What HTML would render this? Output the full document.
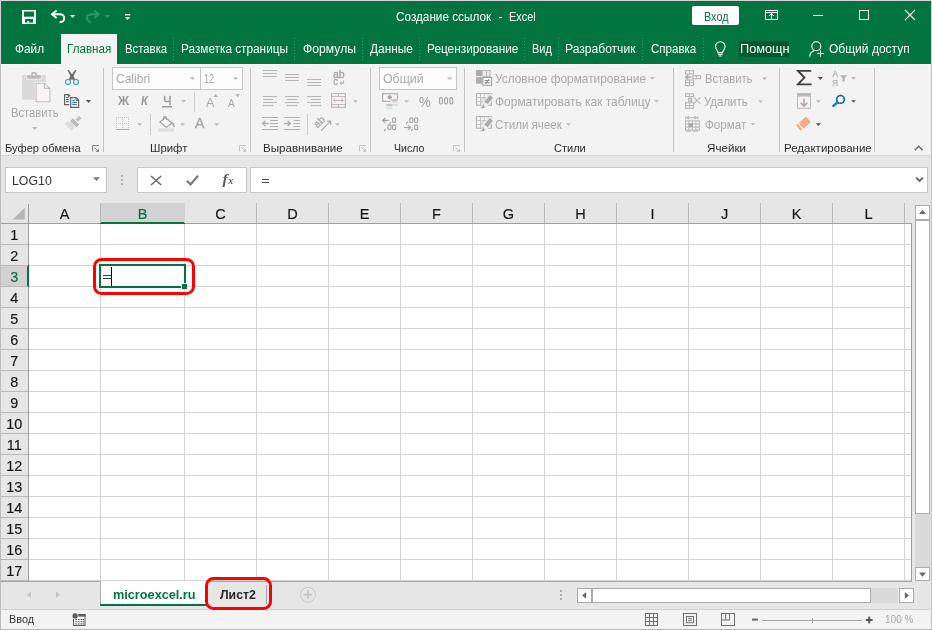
<!DOCTYPE html>
<html><head><meta charset="utf-8"><title>Excel</title>
<style>
html,body{margin:0;padding:0;}
body{width:932px;height:630px;overflow:hidden;position:relative;background:#fff;font-family:"Liberation Sans",sans-serif;}
#app{position:absolute;left:0;top:0;width:932px;height:630px;overflow:hidden;will-change:transform;}
#app div,#app svg{position:absolute;}
.t{position:absolute;white-space:pre;line-height:1;}
</style></head><body><div id="app">
<div style="left:0px;top:0px;width:932px;height:64px;background:#017440;"></div>
<div style="left:0px;top:64px;width:932px;height:91px;background:#f3f3f3;"></div>
<div style="left:0px;top:155px;width:932px;height:1px;background:#d4d4d4;"></div>
<div style="left:0px;top:156px;width:932px;height:47px;background:#e6e6e6;"></div>
<div style="left:0px;top:203px;width:932px;height:378px;background:#e6e6e6;"></div>
<div style="left:0px;top:582px;width:932px;height:28px;background:#e6e6e6;"></div>
<div style="left:0px;top:610px;width:932px;height:20px;background:#f3f3f3;"></div>
<div style="left:0px;top:0px;width:932px;height:1px;background:#8fb8a2;"></div>
<div style="left:61px;top:34px;width:56px;height:30px;background:#f3f3f3;"></div>
<span class="t" style="left:396.00px;top:11.00px;font-size:12px;color:#fff;font-weight:normal;font-style:normal;letter-spacing:0.000px;font-family:'Liberation Sans',sans-serif;transform-origin:0 0;transform:scaleX(0.9786);">Создание ссылок</span>
<span class="t" style="left:498.60px;top:11.00px;font-size:12px;color:#fff;font-weight:normal;font-style:normal;letter-spacing:0.000px;font-family:'Liberation Sans',sans-serif;">-</span>
<span class="t" style="left:509.00px;top:11.00px;font-size:12px;color:#fff;font-weight:normal;font-style:normal;letter-spacing:0.000px;font-family:'Liberation Sans',sans-serif;transform-origin:0 0;transform:scaleX(0.9066);">Excel</span>
<div style="left:692px;top:6px;width:47px;height:19px;background:#fff;border-radius:2px;"></div>
<span class="t" style="left:704.00px;top:11.00px;font-size:12px;color:#017440;font-weight:normal;font-style:normal;letter-spacing:0.000px;font-family:'Liberation Sans',sans-serif;transform-origin:0 0;transform:scaleX(0.9026);">Вход</span>
<span class="t" style="left:15.00px;top:43.00px;font-size:12.5px;color:#fff;font-weight:normal;font-style:normal;letter-spacing:0.000px;font-family:'Liberation Sans',sans-serif;transform-origin:0 0;transform:scaleX(0.9462);">Файл</span>
<span class="t" style="left:66.57px;top:43.00px;font-size:12.5px;color:#017440;font-weight:normal;font-style:normal;letter-spacing:0.000px;font-family:'Liberation Sans',sans-serif;transform-origin:0 0;transform:scaleX(0.9321);">Главная</span>
<span class="t" style="left:124.59px;top:43.00px;font-size:12.5px;color:#fff;font-weight:normal;font-style:normal;letter-spacing:0.000px;font-family:'Liberation Sans',sans-serif;transform-origin:0 0;transform:scaleX(0.9075);">Вставка</span>
<span class="t" style="left:180.56px;top:43.00px;font-size:12.5px;color:#fff;font-weight:normal;font-style:normal;letter-spacing:0.000px;font-family:'Liberation Sans',sans-serif;transform-origin:0 0;transform:scaleX(0.9430);">Разметка страницы</span>
<span class="t" style="left:302.50px;top:43.00px;font-size:12.5px;color:#fff;font-weight:normal;font-style:normal;letter-spacing:0.000px;font-family:'Liberation Sans',sans-serif;transform-origin:0 0;transform:scaleX(0.9741);">Формулы</span>
<span class="t" style="left:370.00px;top:43.00px;font-size:12.5px;color:#fff;font-weight:normal;font-style:normal;letter-spacing:0.000px;font-family:'Liberation Sans',sans-serif;transform-origin:0 0;transform:scaleX(0.9512);">Данные</span>
<span class="t" style="left:426.55px;top:43.00px;font-size:12.5px;color:#fff;font-weight:normal;font-style:normal;letter-spacing:0.000px;font-family:'Liberation Sans',sans-serif;transform-origin:0 0;transform:scaleX(0.9470);">Рецензирование</span>
<span class="t" style="left:531.63px;top:43.00px;font-size:12.5px;color:#fff;font-weight:normal;font-style:normal;letter-spacing:0.000px;font-family:'Liberation Sans',sans-serif;transform-origin:0 0;transform:scaleX(0.8737);">Вид</span>
<span class="t" style="left:565.03px;top:43.00px;font-size:12.5px;color:#fff;font-weight:normal;font-style:normal;letter-spacing:0.000px;font-family:'Liberation Sans',sans-serif;transform-origin:0 0;transform:scaleX(0.9665);">Разработчик</span>
<span class="t" style="left:650.50px;top:43.00px;font-size:12.5px;color:#fff;font-weight:normal;font-style:normal;letter-spacing:0.000px;font-family:'Liberation Sans',sans-serif;transform-origin:0 0;transform:scaleX(0.9229);">Справка</span>
<div style="left:739px;top:41px;width:50px;height:16px;background:#005a2e;"></div>
<div style="left:739px;top:41px;width:50px;height:16px;overflow:hidden;">
<span class="t" style="left:0.78px;top:2.00px;font-size:12.5px;color:#fff;font-weight:normal;font-style:normal;letter-spacing:0.000px;font-family:'Liberation Sans',sans-serif;transform-origin:0 0;transform:scaleX(1.0195);">Помощн</span>
</div>
<span class="t" style="left:828.50px;top:43.00px;font-size:12.5px;color:#fff;font-weight:normal;font-style:normal;letter-spacing:0.000px;font-family:'Liberation Sans',sans-serif;transform-origin:0 0;transform:scaleX(0.9614);">Общий доступ</span>
<div style="left:173px;top:38px;width:1px;height:22px;background:repeating-linear-gradient(to bottom,#2c9b79 0,#2c9b79 1px,transparent 1px,transparent 3px);"></div>
<div style="left:294px;top:38px;width:1px;height:22px;background:repeating-linear-gradient(to bottom,#2c9b79 0,#2c9b79 1px,transparent 1px,transparent 3px);"></div>
<div style="left:362px;top:38px;width:1px;height:22px;background:repeating-linear-gradient(to bottom,#2c9b79 0,#2c9b79 1px,transparent 1px,transparent 3px);"></div>
<div style="left:419px;top:38px;width:1px;height:22px;background:repeating-linear-gradient(to bottom,#2c9b79 0,#2c9b79 1px,transparent 1px,transparent 3px);"></div>
<div style="left:524px;top:38px;width:1px;height:22px;background:repeating-linear-gradient(to bottom,#2c9b79 0,#2c9b79 1px,transparent 1px,transparent 3px);"></div>
<div style="left:558px;top:38px;width:1px;height:22px;background:repeating-linear-gradient(to bottom,#2c9b79 0,#2c9b79 1px,transparent 1px,transparent 3px);"></div>
<div style="left:642px;top:38px;width:1px;height:22px;background:repeating-linear-gradient(to bottom,#2c9b79 0,#2c9b79 1px,transparent 1px,transparent 3px);"></div>
<div style="left:703px;top:38px;width:1px;height:22px;background:repeating-linear-gradient(to bottom,#2c9b79 0,#2c9b79 1px,transparent 1px,transparent 3px);"></div>
<div style="left:29px;top:224px;width:882px;height:357px;background:#fff;"></div>
<div style="left:0px;top:223px;width:912px;height:1px;background:#9e9e9e;"></div>
<div style="left:28px;top:204px;width:1px;height:377px;background:#9e9e9e;"></div>
<div style="left:101px;top:203px;width:83px;height:20px;background:#d2d2d2;"></div>
<div style="left:100px;top:222px;width:85px;height:2px;background:#017440;"></div>
<div style="left:0px;top:266px;width:27px;height:20px;background:#d2d2d2;"></div>
<div style="left:27px;top:265px;width:2px;height:22px;background:#017440;"></div>
<div style="left:100px;top:203px;width:1px;height:20px;background:#b9b9b9;"></div>
<div style="left:100px;top:224px;width:1px;height:357px;background:#d4d4d4;"></div>
<div style="left:184px;top:203px;width:1px;height:20px;background:#d2d2d2;"></div>
<div style="left:184px;top:224px;width:1px;height:357px;background:#d4d4d4;"></div>
<div style="left:256px;top:203px;width:1px;height:20px;background:#b9b9b9;"></div>
<div style="left:256px;top:224px;width:1px;height:357px;background:#d4d4d4;"></div>
<div style="left:328px;top:203px;width:1px;height:20px;background:#b9b9b9;"></div>
<div style="left:328px;top:224px;width:1px;height:357px;background:#d4d4d4;"></div>
<div style="left:400px;top:203px;width:1px;height:20px;background:#b9b9b9;"></div>
<div style="left:400px;top:224px;width:1px;height:357px;background:#d4d4d4;"></div>
<div style="left:472px;top:203px;width:1px;height:20px;background:#b9b9b9;"></div>
<div style="left:472px;top:224px;width:1px;height:357px;background:#d4d4d4;"></div>
<div style="left:544px;top:203px;width:1px;height:20px;background:#b9b9b9;"></div>
<div style="left:544px;top:224px;width:1px;height:357px;background:#d4d4d4;"></div>
<div style="left:616px;top:203px;width:1px;height:20px;background:#b9b9b9;"></div>
<div style="left:616px;top:224px;width:1px;height:357px;background:#d4d4d4;"></div>
<div style="left:688px;top:203px;width:1px;height:20px;background:#b9b9b9;"></div>
<div style="left:688px;top:224px;width:1px;height:357px;background:#d4d4d4;"></div>
<div style="left:760px;top:203px;width:1px;height:20px;background:#b9b9b9;"></div>
<div style="left:760px;top:224px;width:1px;height:357px;background:#d4d4d4;"></div>
<div style="left:832px;top:203px;width:1px;height:20px;background:#b9b9b9;"></div>
<div style="left:832px;top:224px;width:1px;height:357px;background:#d4d4d4;"></div>
<div style="left:904px;top:203px;width:1px;height:20px;background:#b9b9b9;"></div>
<div style="left:904px;top:224px;width:1px;height:357px;background:#d4d4d4;"></div>
<div style="left:29px;top:244px;width:882px;height:1px;background:#d4d4d4;"></div>
<div style="left:0px;top:244px;width:28px;height:1px;background:#b8b8b8;"></div>
<div style="left:29px;top:265px;width:882px;height:1px;background:#d4d4d4;"></div>
<div style="left:0px;top:265px;width:28px;height:1px;background:#b8b8b8;"></div>
<div style="left:29px;top:286px;width:882px;height:1px;background:#d4d4d4;"></div>
<div style="left:0px;top:286px;width:28px;height:1px;background:#b8b8b8;"></div>
<div style="left:29px;top:307px;width:882px;height:1px;background:#d4d4d4;"></div>
<div style="left:0px;top:307px;width:28px;height:1px;background:#b8b8b8;"></div>
<div style="left:29px;top:328px;width:882px;height:1px;background:#d4d4d4;"></div>
<div style="left:0px;top:328px;width:28px;height:1px;background:#b8b8b8;"></div>
<div style="left:29px;top:349px;width:882px;height:1px;background:#d4d4d4;"></div>
<div style="left:0px;top:349px;width:28px;height:1px;background:#b8b8b8;"></div>
<div style="left:29px;top:370px;width:882px;height:1px;background:#d4d4d4;"></div>
<div style="left:0px;top:370px;width:28px;height:1px;background:#b8b8b8;"></div>
<div style="left:29px;top:391px;width:882px;height:1px;background:#d4d4d4;"></div>
<div style="left:0px;top:391px;width:28px;height:1px;background:#b8b8b8;"></div>
<div style="left:29px;top:412px;width:882px;height:1px;background:#d4d4d4;"></div>
<div style="left:0px;top:412px;width:28px;height:1px;background:#b8b8b8;"></div>
<div style="left:29px;top:433px;width:882px;height:1px;background:#d4d4d4;"></div>
<div style="left:0px;top:433px;width:28px;height:1px;background:#b8b8b8;"></div>
<div style="left:29px;top:454px;width:882px;height:1px;background:#d4d4d4;"></div>
<div style="left:0px;top:454px;width:28px;height:1px;background:#b8b8b8;"></div>
<div style="left:29px;top:475px;width:882px;height:1px;background:#d4d4d4;"></div>
<div style="left:0px;top:475px;width:28px;height:1px;background:#b8b8b8;"></div>
<div style="left:29px;top:496px;width:882px;height:1px;background:#d4d4d4;"></div>
<div style="left:0px;top:496px;width:28px;height:1px;background:#b8b8b8;"></div>
<div style="left:29px;top:517px;width:882px;height:1px;background:#d4d4d4;"></div>
<div style="left:0px;top:517px;width:28px;height:1px;background:#b8b8b8;"></div>
<div style="left:29px;top:538px;width:882px;height:1px;background:#d4d4d4;"></div>
<div style="left:0px;top:538px;width:28px;height:1px;background:#b8b8b8;"></div>
<div style="left:29px;top:559px;width:882px;height:1px;background:#d4d4d4;"></div>
<div style="left:0px;top:559px;width:28px;height:1px;background:#b8b8b8;"></div>
<div style="left:29px;top:580px;width:882px;height:1px;background:#d4d4d4;"></div>
<div style="left:0px;top:580px;width:28px;height:1px;background:#b8b8b8;"></div>
<div style="left:911px;top:224px;width:1px;height:358px;background:#9e9e9e;"></div>
<div style="left:912px;top:203px;width:20px;height:379px;background:#e6e6e6;"></div>
<div style="left:0px;top:581px;width:912px;height:1px;background:#a6a6a6;"></div>
<span class="t" style="left:64.50px;top:207.00px;font-size:14.5px;color:#161616;font-weight:normal;font-style:normal;letter-spacing:0.000px;font-family:'Liberation Sans',sans-serif;-webkit-text-stroke:0.15px currentColor;transform:translateX(-50%);">A</span>
<span class="t" style="left:142.50px;top:207.00px;font-size:14.5px;color:#017440;font-weight:normal;font-style:normal;letter-spacing:0.000px;font-family:'Liberation Sans',sans-serif;-webkit-text-stroke:0.15px currentColor;transform:translateX(-50%);">B</span>
<span class="t" style="left:220.50px;top:207.00px;font-size:14.5px;color:#161616;font-weight:normal;font-style:normal;letter-spacing:0.000px;font-family:'Liberation Sans',sans-serif;-webkit-text-stroke:0.15px currentColor;transform:translateX(-50%);">C</span>
<span class="t" style="left:292.50px;top:207.00px;font-size:14.5px;color:#161616;font-weight:normal;font-style:normal;letter-spacing:0.000px;font-family:'Liberation Sans',sans-serif;-webkit-text-stroke:0.15px currentColor;transform:translateX(-50%);">D</span>
<span class="t" style="left:364.50px;top:207.00px;font-size:14.5px;color:#161616;font-weight:normal;font-style:normal;letter-spacing:0.000px;font-family:'Liberation Sans',sans-serif;-webkit-text-stroke:0.15px currentColor;transform:translateX(-50%);">E</span>
<span class="t" style="left:436.50px;top:207.00px;font-size:14.5px;color:#161616;font-weight:normal;font-style:normal;letter-spacing:0.000px;font-family:'Liberation Sans',sans-serif;-webkit-text-stroke:0.15px currentColor;transform:translateX(-50%);">F</span>
<span class="t" style="left:508.50px;top:207.00px;font-size:14.5px;color:#161616;font-weight:normal;font-style:normal;letter-spacing:0.000px;font-family:'Liberation Sans',sans-serif;-webkit-text-stroke:0.15px currentColor;transform:translateX(-50%);">G</span>
<span class="t" style="left:580.50px;top:207.00px;font-size:14.5px;color:#161616;font-weight:normal;font-style:normal;letter-spacing:0.000px;font-family:'Liberation Sans',sans-serif;-webkit-text-stroke:0.15px currentColor;transform:translateX(-50%);">H</span>
<span class="t" style="left:652.50px;top:207.00px;font-size:14.5px;color:#161616;font-weight:normal;font-style:normal;letter-spacing:0.000px;font-family:'Liberation Sans',sans-serif;-webkit-text-stroke:0.15px currentColor;transform:translateX(-50%);">I</span>
<span class="t" style="left:724.50px;top:207.00px;font-size:14.5px;color:#161616;font-weight:normal;font-style:normal;letter-spacing:0.000px;font-family:'Liberation Sans',sans-serif;-webkit-text-stroke:0.15px currentColor;transform:translateX(-50%);">J</span>
<span class="t" style="left:796.50px;top:207.00px;font-size:14.5px;color:#161616;font-weight:normal;font-style:normal;letter-spacing:0.000px;font-family:'Liberation Sans',sans-serif;-webkit-text-stroke:0.15px currentColor;transform:translateX(-50%);">K</span>
<span class="t" style="left:868.50px;top:207.00px;font-size:14.5px;color:#161616;font-weight:normal;font-style:normal;letter-spacing:0.000px;font-family:'Liberation Sans',sans-serif;-webkit-text-stroke:0.15px currentColor;transform:translateX(-50%);">L</span>
<span class="t" style="left:14.20px;top:228.00px;font-size:14.4px;color:#161616;font-weight:normal;font-style:normal;letter-spacing:0.000px;font-family:'Liberation Sans',sans-serif;-webkit-text-stroke:0.15px currentColor;transform:translateX(-50%);">1</span>
<span class="t" style="left:14.20px;top:249.00px;font-size:14.4px;color:#161616;font-weight:normal;font-style:normal;letter-spacing:0.000px;font-family:'Liberation Sans',sans-serif;-webkit-text-stroke:0.15px currentColor;transform:translateX(-50%);">2</span>
<span class="t" style="left:14.20px;top:270.00px;font-size:14.4px;color:#017440;font-weight:normal;font-style:normal;letter-spacing:0.000px;font-family:'Liberation Sans',sans-serif;-webkit-text-stroke:0.15px currentColor;transform:translateX(-50%);">3</span>
<span class="t" style="left:14.20px;top:291.00px;font-size:14.4px;color:#161616;font-weight:normal;font-style:normal;letter-spacing:0.000px;font-family:'Liberation Sans',sans-serif;-webkit-text-stroke:0.15px currentColor;transform:translateX(-50%);">4</span>
<span class="t" style="left:14.20px;top:312.00px;font-size:14.4px;color:#161616;font-weight:normal;font-style:normal;letter-spacing:0.000px;font-family:'Liberation Sans',sans-serif;-webkit-text-stroke:0.15px currentColor;transform:translateX(-50%);">5</span>
<span class="t" style="left:14.20px;top:333.00px;font-size:14.4px;color:#161616;font-weight:normal;font-style:normal;letter-spacing:0.000px;font-family:'Liberation Sans',sans-serif;-webkit-text-stroke:0.15px currentColor;transform:translateX(-50%);">6</span>
<span class="t" style="left:14.20px;top:354.00px;font-size:14.4px;color:#161616;font-weight:normal;font-style:normal;letter-spacing:0.000px;font-family:'Liberation Sans',sans-serif;-webkit-text-stroke:0.15px currentColor;transform:translateX(-50%);">7</span>
<span class="t" style="left:14.20px;top:375.00px;font-size:14.4px;color:#161616;font-weight:normal;font-style:normal;letter-spacing:0.000px;font-family:'Liberation Sans',sans-serif;-webkit-text-stroke:0.15px currentColor;transform:translateX(-50%);">8</span>
<span class="t" style="left:14.20px;top:396.00px;font-size:14.4px;color:#161616;font-weight:normal;font-style:normal;letter-spacing:0.000px;font-family:'Liberation Sans',sans-serif;-webkit-text-stroke:0.15px currentColor;transform:translateX(-50%);">9</span>
<span class="t" style="left:14.20px;top:417.00px;font-size:14.4px;color:#161616;font-weight:normal;font-style:normal;letter-spacing:0.000px;font-family:'Liberation Sans',sans-serif;-webkit-text-stroke:0.15px currentColor;transform:translateX(-50%);">10</span>
<span class="t" style="left:14.20px;top:438.00px;font-size:14.4px;color:#161616;font-weight:normal;font-style:normal;letter-spacing:0.000px;font-family:'Liberation Sans',sans-serif;-webkit-text-stroke:0.15px currentColor;transform:translateX(-50%);">11</span>
<span class="t" style="left:14.20px;top:459.00px;font-size:14.4px;color:#161616;font-weight:normal;font-style:normal;letter-spacing:0.000px;font-family:'Liberation Sans',sans-serif;-webkit-text-stroke:0.15px currentColor;transform:translateX(-50%);">12</span>
<span class="t" style="left:14.20px;top:480.00px;font-size:14.4px;color:#161616;font-weight:normal;font-style:normal;letter-spacing:0.000px;font-family:'Liberation Sans',sans-serif;-webkit-text-stroke:0.15px currentColor;transform:translateX(-50%);">13</span>
<span class="t" style="left:14.20px;top:501.00px;font-size:14.4px;color:#161616;font-weight:normal;font-style:normal;letter-spacing:0.000px;font-family:'Liberation Sans',sans-serif;-webkit-text-stroke:0.15px currentColor;transform:translateX(-50%);">14</span>
<span class="t" style="left:14.20px;top:522.00px;font-size:14.4px;color:#161616;font-weight:normal;font-style:normal;letter-spacing:0.000px;font-family:'Liberation Sans',sans-serif;-webkit-text-stroke:0.15px currentColor;transform:translateX(-50%);">15</span>
<span class="t" style="left:14.20px;top:543.00px;font-size:14.4px;color:#161616;font-weight:normal;font-style:normal;letter-spacing:0.000px;font-family:'Liberation Sans',sans-serif;-webkit-text-stroke:0.15px currentColor;transform:translateX(-50%);">16</span>
<span class="t" style="left:14.20px;top:564.00px;font-size:14.4px;color:#161616;font-weight:normal;font-style:normal;letter-spacing:0.000px;font-family:'Liberation Sans',sans-serif;-webkit-text-stroke:0.15px currentColor;transform:translateX(-50%);">17</span>
<div style="left:99px;top:264px;width:87px;height:24px;border:2px solid #017440;box-sizing:border-box;"></div>
<div style="left:181px;top:283px;width:6px;height:6px;background:#fff;"></div>
<div style="left:182px;top:284px;width:5px;height:5px;background:#017440;"></div>
<div style="left:111px;top:267px;width:1px;height:19px;background:#000;"></div>
<div style="left:103px;top:275px;width:8px;height:1px;background:#3c3c3c;"></div>
<div style="left:103px;top:278px;width:8px;height:1px;background:#3c3c3c;"></div>
<div style="left:5px;top:167px;width:102px;height:26px;background:#fff;border:1px solid #c6c6c6;box-sizing:border-box;"></div>
<span class="t" style="left:11.57px;top:174.00px;font-size:13.2px;color:#333;font-weight:normal;font-style:normal;letter-spacing:0.000px;font-family:'Liberation Sans',sans-serif;transform-origin:0 0;transform:scaleX(0.9348);">LOG10</span>
<div style="left:137px;top:167px;width:110px;height:26px;background:#fff;border:1px solid #c6c6c6;box-sizing:border-box;"></div>
<div style="left:250px;top:167px;width:678px;height:26px;background:#fff;border:1px solid #c6c6c6;box-sizing:border-box;"></div>
<div style="left:262px;top:179px;width:7px;height:1px;background:#4a4a4a;"></div>
<div style="left:262px;top:182px;width:7px;height:1px;background:#4a4a4a;"></div>
<div style="left:100px;top:581px;width:107px;height:25px;background:#fff;"></div>
<div style="left:100px;top:581px;width:1px;height:23px;background:#ababab;"></div>
<div style="left:100px;top:604px;width:107px;height:2px;background:#017440;"></div>
<span class="t" style="left:112.50px;top:588.00px;font-size:13.2px;color:#017440;font-weight:bold;font-style:normal;letter-spacing:0.000px;font-family:'Liberation Sans',sans-serif;transform-origin:0 0;transform:scaleX(0.9626);">microexcel.ru</span>
<span class="t" style="left:219.50px;top:588.00px;font-size:13.2px;color:#262626;font-weight:bold;font-style:normal;letter-spacing:0.000px;font-family:'Liberation Sans',sans-serif;transform-origin:0 0;transform:scaleX(0.9305);">Лист2</span>
<div style="left:266px;top:585px;width:1px;height:19px;background:#a3a3a3;"></div>
<span class="t" style="left:8.60px;top:614.00px;font-size:11.2px;color:#333;font-weight:normal;font-style:normal;letter-spacing:0.000px;font-family:'Liberation Sans',sans-serif;transform-origin:0 0;transform:scaleX(0.9712);">Ввод</span>
<span class="t" style="left:885.00px;top:614.00px;font-size:11.2px;color:#a8a8a8;font-weight:normal;font-style:normal;letter-spacing:0.000px;font-family:'Liberation Sans',sans-serif;transform-origin:0 0;transform:scaleX(0.9001);">100 %</span>
<div style="left:0px;top:0px;width:932px;height:1px;background:#ddd3d7;"></div>
<div style="left:0px;top:1px;width:1px;height:63px;background:#dcd1d5;"></div>
<div style="left:0px;top:64px;width:1px;height:566px;background:#bcbcbc;"></div>
<div style="left:931px;top:1px;width:1px;height:63px;background:#d9d3d6;"></div>
<div style="left:931px;top:64px;width:1px;height:566px;background:#c2c2c2;"></div>
<div style="left:1px;top:64px;width:60px;height:1px;background:#fbfbfb;"></div>
<div style="left:117px;top:64px;width:814px;height:1px;background:#fbfbfb;"></div>
<div style="left:0px;top:629px;width:932px;height:1px;background:#b5b5b5;"></div>
<div style="left:0px;top:609px;width:932px;height:1px;background:#d0d0d0;"></div>
<span class="t" style="left:10.70px;top:108.00px;font-size:11.9px;color:#a8a8a8;font-weight:normal;font-style:normal;letter-spacing:0.000px;font-family:'Liberation Sans',sans-serif;transform-origin:0 0;transform:scaleX(0.9441);">Вставить</span>
<span class="t" style="left:5.40px;top:142.00px;font-size:11.6px;color:#2b2b2b;font-weight:normal;font-style:normal;letter-spacing:0.000px;font-family:'Liberation Sans',sans-serif;transform-origin:0 0;transform:scaleX(0.9593);">Буфер обмена</span>
<span class="t" style="left:149.50px;top:142.00px;font-size:11.6px;color:#2b2b2b;font-weight:normal;font-style:normal;letter-spacing:0.000px;font-family:'Liberation Sans',sans-serif;transform-origin:0 0;transform:scaleX(0.9785);">Шрифт</span>
<span class="t" style="left:262.50px;top:142.00px;font-size:11.6px;color:#2b2b2b;font-weight:normal;font-style:normal;letter-spacing:0.000px;font-family:'Liberation Sans',sans-serif;transform-origin:0 0;transform:scaleX(0.9993);">Выравнивание</span>
<span class="t" style="left:394.00px;top:142.00px;font-size:11.6px;color:#2b2b2b;font-weight:normal;font-style:normal;letter-spacing:0.000px;font-family:'Liberation Sans',sans-serif;transform-origin:0 0;transform:scaleX(0.9120);">Число</span>
<span class="t" style="left:553.50px;top:142.00px;font-size:11.6px;color:#2b2b2b;font-weight:normal;font-style:normal;letter-spacing:0.000px;font-family:'Liberation Sans',sans-serif;transform-origin:0 0;transform:scaleX(0.9507);">Стили</span>
<span class="t" style="left:706.50px;top:142.00px;font-size:11.6px;color:#2b2b2b;font-weight:normal;font-style:normal;letter-spacing:0.000px;font-family:'Liberation Sans',sans-serif;transform-origin:0 0;transform:scaleX(1.0024);">Ячейки</span>
<span class="t" style="left:783.50px;top:142.00px;font-size:11.6px;color:#2b2b2b;font-weight:normal;font-style:normal;letter-spacing:0.000px;font-family:'Liberation Sans',sans-serif;transform-origin:0 0;transform:scaleX(0.9935);">Редактирование</span>
<div style="left:103px;top:68px;width:1px;height:84px;background:#c3c3c3;"></div>
<div style="left:250px;top:68px;width:1px;height:84px;background:#c3c3c3;"></div>
<div style="left:370px;top:68px;width:1px;height:84px;background:#c3c3c3;"></div>
<div style="left:464px;top:68px;width:1px;height:84px;background:#c3c3c3;"></div>
<div style="left:673px;top:68px;width:1px;height:84px;background:#c3c3c3;"></div>
<div style="left:779px;top:68px;width:1px;height:84px;background:#c3c3c3;"></div>
<div style="left:874px;top:68px;width:1px;height:84px;background:#c3c3c3;"></div>
<div style="left:112px;top:67px;width:89px;height:23px;background:#fdfdfd;border:1px solid #c6c6c6;box-sizing:border-box;"></div>
<div style="left:200px;top:67px;width:43px;height:23px;background:#fdfdfd;border:1px solid #c6c6c6;box-sizing:border-box;"></div>
<span class="t" style="left:115.70px;top:74.00px;font-size:11.9px;color:#a8a8a8;font-weight:normal;font-style:normal;letter-spacing:0.000px;font-family:'Liberation Sans',sans-serif;transform-origin:0 0;transform:scaleX(1.0104);">Calibri</span>
<span class="t" style="left:203.90px;top:74.00px;font-size:11.9px;color:#a8a8a8;font-weight:normal;font-style:normal;letter-spacing:0.000px;font-family:'Liberation Sans',sans-serif;transform-origin:0 0;transform:scaleX(0.7713);">12</span>
<div style="left:379px;top:67px;width:78px;height:23px;background:#fdfdfd;border:1px solid #c6c6c6;box-sizing:border-box;"></div>
<span class="t" style="left:382.70px;top:74.00px;font-size:11.9px;color:#a8a8a8;font-weight:normal;font-style:normal;letter-spacing:0.000px;font-family:'Liberation Sans',sans-serif;transform-origin:0 0;transform:scaleX(1.0368);">Общий</span>
<span class="t" style="left:117.68px;top:95.00px;font-size:12.4px;color:#9a9a9a;font-weight:bold;font-style:normal;letter-spacing:0.000px;font-family:'Liberation Sans',sans-serif;transform-origin:0 0;transform:scaleX(0.9846);">Ж</span>
<span class="t" style="left:140.50px;top:95.00px;font-size:12.4px;color:#9a9a9a;font-weight:bold;font-style:italic;letter-spacing:0.000px;font-family:'Liberation Sans',sans-serif;transform-origin:0 0;transform:scaleX(0.9000);">К</span>
<span class="t" style="left:162.70px;top:95.00px;font-size:12.4px;color:#9a9a9a;font-weight:normal;font-style:normal;letter-spacing:0.000px;font-family:'Liberation Sans',sans-serif;-webkit-text-stroke:0.3px #9a9a9a;transform-origin:0 0;transform:scaleX(1.0375);">Ч</span>
<div style="left:162px;top:106px;width:10px;height:1px;background:#9a9a9a;"></div>
<div style="left:162px;top:107px;width:10px;height:1px;background:#c4c4c4;"></div>
<div style="left:194px;top:92px;width:1px;height:20px;background:#cdcdcd;"></div>
<div style="left:150px;top:114px;width:1px;height:21px;background:#cdcdcd;"></div>
<div style="left:307px;top:114px;width:1px;height:21px;background:#cdcdcd;"></div>
<span class="t" style="left:205.50px;top:96.00px;font-size:13px;color:#a8a8a8;font-weight:normal;font-style:normal;letter-spacing:0.000px;font-family:'Liberation Sans',sans-serif;transform-origin:0 0;transform:scaleX(0.9556);">A</span>
<span class="t" style="left:228.20px;top:98.00px;font-size:10.8px;color:#a8a8a8;font-weight:normal;font-style:normal;letter-spacing:0.000px;font-family:'Liberation Sans',sans-serif;transform-origin:0 0;transform:scaleX(0.9375);">A</span>
<span class="t" style="left:195.30px;top:116.00px;font-size:14.6px;color:#a8a8a8;font-weight:normal;font-style:normal;letter-spacing:0.000px;font-family:'Liberation Sans',sans-serif;-webkit-text-stroke:0.35px #a8a8a8;transform-origin:0 0;transform:scaleX(0.9700);">A</span>
<span class="t" style="left:418.80px;top:95.00px;font-size:14.2px;color:#a0a0a0;font-weight:normal;font-style:normal;letter-spacing:0.000px;font-family:'Liberation Sans',sans-serif;transform-origin:0 0;transform:scaleX(0.9308);">%</span>
<span class="t" style="left:495.40px;top:74.00px;font-size:11.9px;color:#a8a8a8;font-weight:normal;font-style:normal;letter-spacing:0.000px;font-family:'Liberation Sans',sans-serif;transform-origin:0 0;transform:scaleX(0.9983);">Условное форматирование</span>
<span class="t" style="left:495.40px;top:97.00px;font-size:11.9px;color:#a8a8a8;font-weight:normal;font-style:normal;letter-spacing:0.000px;font-family:'Liberation Sans',sans-serif;transform-origin:0 0;transform:scaleX(1.0054);">Форматировать как таблицу</span>
<span class="t" style="left:495.40px;top:120.00px;font-size:11.9px;color:#a8a8a8;font-weight:normal;font-style:normal;letter-spacing:0.000px;font-family:'Liberation Sans',sans-serif;transform-origin:0 0;transform:scaleX(0.9738);">Стили ячеек</span>
<span class="t" style="left:704.80px;top:74.00px;font-size:11.9px;color:#a8a8a8;font-weight:normal;font-style:normal;letter-spacing:0.000px;font-family:'Liberation Sans',sans-serif;transform-origin:0 0;transform:scaleX(0.9401);">Вставить</span>
<span class="t" style="left:704.10px;top:97.00px;font-size:11.9px;color:#a8a8a8;font-weight:normal;font-style:normal;letter-spacing:0.000px;font-family:'Liberation Sans',sans-serif;transform-origin:0 0;transform:scaleX(0.9624);">Удалить</span>
<span class="t" style="left:704.80px;top:120.00px;font-size:11.9px;color:#a8a8a8;font-weight:normal;font-style:normal;letter-spacing:0.000px;font-family:'Liberation Sans',sans-serif;transform-origin:0 0;transform:scaleX(0.9768);">Формат</span>
<div style="left:915px;top:205px;width:15px;height:15px;background:#fff;border:1px solid #ababab;box-sizing:border-box;"></div>
<div style="left:915px;top:220px;width:15px;height:294px;background:#fff;border:1px solid #ababab;box-sizing:border-box;"></div>
<div style="left:915px;top:514px;width:15px;height:53px;background:#dadada;"></div>
<div style="left:915px;top:567px;width:15px;height:14px;background:#fff;border:1px solid #ababab;box-sizing:border-box;"></div>
<div style="left:577px;top:588px;width:15px;height:15px;background:#fff;border:1px solid #ababab;box-sizing:border-box;"></div>
<div style="left:592px;top:588px;width:279px;height:15px;background:#fff;border:1px solid #ababab;box-sizing:border-box;"></div>
<div style="left:871px;top:588px;width:27px;height:15px;background:#dadada;"></div>
<div style="left:899px;top:588px;width:15px;height:15px;background:#fff;border:1px solid #ababab;box-sizing:border-box;"></div>
<div style="left:93px;top:258px;width:102px;height:37px;border:3px solid #fe0000;box-sizing:border-box;border-radius:8.5px;z-index:20;"></div>
<div style="left:205px;top:577px;width:67px;height:33px;border:3px solid #fe0000;box-sizing:border-box;border-radius:8.5px;z-index:20;"></div>
<svg width="932" height="630" viewBox="0 0 932 630" style="left:0;top:0;"><rect x="22" y="10" width="14" height="14" fill="#fff"/>
<rect x="24" y="11.5" width="10" height="5.2" fill="#017440"/>
<rect x="25" y="19" width="8" height="3.6" fill="#017440"/>
<rect x="27" y="21.2" width="2" height="1.7" fill="#fff"/>
<path d="M56.6 10.6L52 14.3L56.6 18.1" fill="none" stroke="#fff" stroke-width="1.9" stroke-linejoin="miter"/>
<path d="M52 14.3H59.4C65.6 14.3 66 21.8 59.6 22.2" fill="none" stroke="#fff" stroke-width="1.9" stroke-linecap="butt"/>
<path d="M70 15H75.2L72.6 18Z" fill="#fff"/>
<path d="M94.2 10.6L98.8 14.3L94.2 18.1" fill="none" stroke="#2a9a6c" stroke-width="1.9"/>
<path d="M98.8 14.3H92.4C85.2 14.3 85 19.5 91 22.4" fill="none" stroke="#2a9a6c" stroke-width="1.9"/>
<path d="M104.9 15H110.1L107.5 18Z" fill="#2a9a6c"/>
<rect x="125" y="14" width="5.2" height="1.4" fill="#fff"/>
<path d="M125 17H130.2L127.6 20.1Z" fill="#fff"/>
<rect x="765.5" y="10.5" width="12" height="9" fill="none" stroke="#fff" stroke-width="1"/>
<path d="M765 12.5H778" stroke="#fff" stroke-width="1"/>
<path d="M771.5 13.6V19.5M769 16L771.5 13.6L774 16" fill="none" stroke="#fff" stroke-width="1"/>
<rect x="813" y="15" width="10" height="1" fill="#fff"/>
<rect x="859.5" y="10.5" width="9" height="9" fill="none" stroke="#fff" stroke-width="1"/>
<path d="M905 10L915 20M915 10L905 20" stroke="#fff" stroke-width="1.1"/>
<path d="M718 52.6C718 50.6 715.5 49.4 715.5 46.6A4.8 4.8 0 0 1 725.1 46.6C725.1 49.4 722.6 50.6 722.6 52.6Z" fill="none" stroke="#fff" stroke-width="1.1"/>
<path d="M718 54.3H722.6M718.8 56H721.8" stroke="#fff" stroke-width="1"/>
<circle cx="816.3" cy="46.2" r="4.5" fill="none" stroke="#fff" stroke-width="1.1"/>
<path d="M809.6 56.6C810 53.4 812 51.3 814.3 50.6" fill="none" stroke="#fff" stroke-width="1.1"/>
<path d="M817.3 53.5H823.8M820.5 50.2V56.8" stroke="#fff" stroke-width="1.1"/>
<rect x="22" y="75" width="23.8" height="24.7" rx="1.2" fill="#dadada"/>
<rect x="26.4" y="75" width="15.1" height="4.6" fill="#f3f3f3"/>
<rect x="27.1" y="75.2" width="13.7" height="3.5" fill="#b9b9b9"/>
<path d="M31.1 75.6V73.6Q31.1 72 32.7 72H35.2Q36.8 72 36.8 73.6V75.6Z" fill="#b9b9b9"/>
<circle cx="33.95" cy="74.6" r="1.15" fill="#fafafa"/>
<path d="M36.1 83.2H44.4L49.9 88.4V101.8H36.1Z" fill="none" stroke="#f3f3f3" stroke-width="2.6"/>
<path d="M36.1 83.2H44.4L49.9 88.4V101.8H36.1Z" fill="#faf3f7" stroke="#c0c0c0" stroke-width="1.1"/>
<path d="M44.4 83.2V88.4H49.9" fill="none" stroke="#c0c0c0" stroke-width="1.1"/>
<path d="M32 127.1H37.2L34.6 130Z" fill="#b9b9b9"/>
<path d="M67.4 70.3L68.9 70L75.3 79.3L72.9 80.2Z" fill="#686868"/>
<path d="M76.5 70.3L75 70L68.6 79.3L71 80.2Z" fill="#686868"/>
<circle cx="71.95" cy="76.8" r="1.6" fill="#686868"/>
<circle cx="67.95" cy="81.9" r="2.45" fill="#fbf6f4" stroke="#1f9fe0" stroke-width="1.1"/>
<circle cx="76" cy="81.9" r="2.45" fill="#fbf6f4" stroke="#1f9fe0" stroke-width="1.1"/>
<path d="M64.6 94.6H68.6L71 97V104.7H64.6Z" fill="#fdfdfd" stroke="#626262" stroke-width="1.2" />
<path d="M68.4 94.6V97.2H71" fill="none" stroke="#626262" stroke-width="1" />
<rect x="66" y="97" width="2.200000000000003" height="1.1" fill="#1f6fb5"/>
<rect x="66" y="99" width="2.799999999999997" height="1.1" fill="#1f6fb5"/>
<rect x="66" y="101.1" width="2.799999999999997" height="1.1" fill="#1f6fb5"/>
<path d="M70.7 97.6H76.3L78.6 100V107.4H70.7Z" fill="none" stroke="#f3f3f3" stroke-width="2.6" />
<path d="M70.7 97.6H76.3L78.6 100V107.4H70.7Z" fill="#fdfdfd" stroke="#626262" stroke-width="1.2" />
<path d="M76 97.6V100.3H78.6" fill="none" stroke="#626262" stroke-width="1" />
<rect x="72.2" y="99.7" width="2.3999999999999915" height="1.1" fill="#1f6fb5"/>
<rect x="72.2" y="101.8" width="4.599999999999994" height="1.1" fill="#1f6fb5"/>
<rect x="72.2" y="103.8" width="4.599999999999994" height="1.1" fill="#1f6fb5"/>
<path d="M85.9 100H91.1L88.5 103Z" fill="#555"/>
<g transform="translate(80.3 117.1) rotate(45)"><rect x="-1.7" y="0" width="3.4" height="4.8" fill="#c1c1c1"/><rect x="-4.4" y="6" width="8.8" height="3.8" fill="#b9b9b9"/><path d="M-4.3 10.3H2.9L3.5 16L-6.6 15.4Z" fill="#dcdcdc"/></g>
<path d="M189.8 77.3H195L192.4 79.9Z" fill="#b9b9b9"/>
<path d="M232.9 77.3H238L235.45 79.9Z" fill="#b9b9b9"/>
<path d="M180.9 100H186.2L183.55 102.6Z" fill="#b9b9b9"/>
<path d="M137 123.2H142.3L139.65 125.7Z" fill="#b9b9b9"/>
<path d="M179.9 123.2H185.1L182.5 125.7Z" fill="#b9b9b9"/>
<path d="M214.1 123.2H219.2L216.64999999999998 125.7Z" fill="#b9b9b9"/>
<path d="M213.3 96.9H218L215.65 94Z" fill="#b4b4b4"/>
<path d="M235.2 94H240L237.6 96.9Z" fill="#b4b4b4"/>
<path d="M116.5 117V129" fill="none" stroke="#cbc0c6" stroke-width="1" stroke-dasharray="1 1"/>
<path d="M122.5 117V129" fill="none" stroke="#cbc0c6" stroke-width="1" stroke-dasharray="1 1"/>
<path d="M128.5 117V129" fill="none" stroke="#cbc0c6" stroke-width="1" stroke-dasharray="1 1"/>
<path d="M116 117.5H129" fill="none" stroke="#cbc0c6" stroke-width="1" stroke-dasharray="1 1"/>
<path d="M116 123.5H129" fill="none" stroke="#cbc0c6" stroke-width="1" stroke-dasharray="1 1"/>
<rect x="116" y="129" width="13" height="1" fill="#a9a9a9"/>
<path d="M165.3 117.6L172 123.2L166.4 127.3L160 122.1Z" fill="#fcfcfc" stroke="#a2a2a2" stroke-width="1.25" />
<path d="M163.5 120.6V117.7Q163.5 116.2 164.9 116.2Q166.3 116.2 166.3 117.7V119.4" fill="none" stroke="#a2a2a2" stroke-width="1.1" />
<path d="M171 121.2Q175 122.6 174.6 127.2Q172.6 127 172.3 124.4Z" fill="#a9a9a9"/>
<rect x="158.2" y="128.3" width="15.8" height="3.4" fill="#e0e0e0"/>
<rect x="263" y="70" width="14" height="1" fill="#b4b4b4"/>
<rect x="263" y="73" width="14" height="1" fill="#b4b4b4"/>
<rect x="263" y="76" width="14" height="1" fill="#b4b4b4"/>
<rect x="285" y="74" width="14" height="1" fill="#b4b4b4"/>
<rect x="285" y="77" width="14" height="1" fill="#b4b4b4"/>
<rect x="285" y="80" width="14" height="1" fill="#b4b4b4"/>
<rect x="307" y="79" width="14" height="1" fill="#b4b4b4"/>
<rect x="307" y="82" width="14" height="1" fill="#b4b4b4"/>
<rect x="307" y="85" width="14" height="1" fill="#b4b4b4"/>
<rect x="263" y="96" width="14" height="1" fill="#b4b4b4"/>
<rect x="285" y="96" width="14" height="1" fill="#b4b4b4"/>
<rect x="307" y="96" width="14" height="1" fill="#b4b4b4"/>
<rect x="263" y="99" width="10" height="1" fill="#b4b4b4"/>
<rect x="287" y="99" width="10" height="1" fill="#b4b4b4"/>
<rect x="311" y="99" width="10" height="1" fill="#b4b4b4"/>
<rect x="263" y="102" width="14" height="1" fill="#b4b4b4"/>
<rect x="285" y="102" width="14" height="1" fill="#b4b4b4"/>
<rect x="307" y="102" width="14" height="1" fill="#b4b4b4"/>
<rect x="263" y="105" width="10" height="1" fill="#b4b4b4"/>
<rect x="287" y="105" width="10" height="1" fill="#b4b4b4"/>
<rect x="311" y="105" width="10" height="1" fill="#b4b4b4"/>
<text x="333" y="77.7" font-size="10.2" fill="#a6a6a6" font-family="Liberation Sans, sans-serif" textLength="11.7" lengthAdjust="spacingAndGlyphs" stroke="#a6a6a6" stroke-width=".35">ab</text>
<text x="333.2" y="84.8" font-size="10.2" fill="#a6a6a6" font-family="Liberation Sans, sans-serif" textLength="4.5" lengthAdjust="spacingAndGlyphs" stroke="#a6a6a6" stroke-width=".35">c</text>
<path d="M343.6 80.6V83.2H340.4M341.9 81.7L340.3 83.2L341.9 84.7" fill="none" stroke="#a6a6a6" stroke-width="1" />
<rect x="331.6" y="93.6" width="13.8" height="13.8" fill="#f9f2f5" stroke="#c0b8bc" stroke-width="1.2"/>
<rect x="331" y="96" width="15" height="1" fill="#c0b8bc"/>
<rect x="331" y="104" width="15" height="1" fill="#c0b8bc"/>
<rect x="338" y="94" width="1" height="2" fill="#c0b8bc"/>
<rect x="338" y="105" width="1" height="2" fill="#c0b8bc"/>
<path d="M333.6 100.5H343.4M335.4 98.8L333.6 100.5L335.4 102.2M341.6 98.8L343.4 100.5L341.6 102.2" fill="none" stroke="#c0b8bc" stroke-width="1" />
<path d="M353 100.2H357.9L355.45 102.7Z" fill="#b9b9b9"/>
<rect x="262" y="117" width="16" height="1" fill="#b0b0b0"/>
<rect x="262" y="129" width="16" height="1" fill="#b0b0b0"/>
<rect x="270" y="120" width="8" height="1" fill="#b0b0b0"/>
<rect x="270" y="123" width="8" height="1" fill="#b0b0b0"/>
<rect x="270" y="126" width="8" height="1" fill="#b0b0b0"/>
<path d="M262.6 123.5H268.6M265.3 121L262.7 123.5L265.3 126" fill="none" stroke="#b0b0b0" stroke-width="1.5" />
<rect x="284" y="117" width="16" height="1" fill="#b0b0b0"/>
<rect x="284" y="129" width="16" height="1" fill="#b0b0b0"/>
<rect x="293.5" y="120" width="6.5" height="1" fill="#b0b0b0"/>
<rect x="293.5" y="123" width="6.5" height="1" fill="#b0b0b0"/>
<rect x="293.5" y="126" width="6.5" height="1" fill="#b0b0b0"/>
<path d="M284.2 123.5H290.4M287.7 121L290.3 123.5L287.7 126" fill="none" stroke="#b0b0b0" stroke-width="1.5" />
<text x="0" y="0" font-size="10.6" fill="#a9a9a9" font-family="Liberation Sans, sans-serif" transform="translate(317.6 128.6) rotate(-45)" textLength="11.6" lengthAdjust="spacingAndGlyphs" stroke="#a9a9a9" stroke-width=".3">ab</text>
<path d="M321.2 130.6L330.6 121.2M327 121.1H330.7V124.8" fill="none" stroke="#a9a9a9" stroke-width="1.15" />
<path d="M335 123.2H339.9L337.45 125.7Z" fill="#b9b9b9"/>
<path d="M447 77.3H452.1L449.55 79.9Z" fill="#b9b9b9"/>
<path d="M404 100.2H409.1L406.55 102.8Z" fill="#b9b9b9"/>
<rect x="382.6" y="93.7" width="14.8" height="7.6" fill="#faf4f7" stroke="#b0b0b0" stroke-width="1.2"/>
<path d="M382 93.1H385L382 96ZM398 93.1H395L398 96ZM382 101.9H385L382 99ZM398 101.9H395L398 99Z" fill="#b0b0b0"/>
<circle cx="389.8" cy="97.3" r="2.1" fill="#a4a4a4"/>
<ellipse cx="394.4" cy="100.4" rx="4.4" ry="2" fill="#f3f3f3"/>
<ellipse cx="394.4" cy="100.3" rx="3.7" ry="1.35" fill="#c4c4c4"/>
<rect x="390.4" y="102" width="8" height="4.4" fill="#f3f3f3"/>
<rect x="393" y="102.4" width="4.600000000000023" height="0.8" fill="#d6d6d6"/>
<rect x="393" y="104" width="4.600000000000023" height="0.8" fill="#d6d6d6"/>
<rect x="393" y="105.4" width="4.600000000000023" height="0.8" fill="#d6d6d6"/>
<ellipse cx="389.4" cy="105" rx="3.7" ry="1.35" fill="#c8c8c8"/>
<rect x="386.2" y="106.6" width="6.199999999999989" height="0.8" fill="#d8d8d8"/>
<rect x="386.2" y="108.2" width="6.199999999999989" height="0.8" fill="#d8d8d8"/>
<path d="M382.4 120.4H388.8M385.4 118L382.5 120.4L385.4 122.8" fill="none" stroke="#a2a2a2" stroke-width="1.15" />
<path d="M390.9 122L389.4 124.3" fill="none" stroke="#a2a2a2" stroke-width="1.1" />
<rect x="392.5" y="117.7" width="3.2" height="4.8" rx="1.6" fill="none" stroke="#a2a2a2" stroke-width="1.15"/>
<path d="M385.6 128.8L384.1 131.10000000000002" fill="none" stroke="#a2a2a2" stroke-width="1.1" />
<rect x="387.9" y="124.8" width="3.2" height="4.8" rx="1.6" fill="none" stroke="#a2a2a2" stroke-width="1.15"/>
<rect x="392.5" y="124.8" width="3.2" height="4.8" rx="1.6" fill="none" stroke="#a2a2a2" stroke-width="1.15"/>
<path d="M407.6 121.8L406.1 124.1" fill="none" stroke="#a2a2a2" stroke-width="1.1" />
<rect x="409.7" y="117.7" width="3.2" height="4.8" rx="1.6" fill="none" stroke="#a2a2a2" stroke-width="1.15"/>
<rect x="414.5" y="117.7" width="3.2" height="4.8" rx="1.6" fill="none" stroke="#a2a2a2" stroke-width="1.15"/>
<path d="M404 127.5H410.6M407.8 125.1L410.7 127.5L407.8 129.9" fill="none" stroke="#a2a2a2" stroke-width="1.15" />
<path d="M412.7 128.8L411.2 131.10000000000002" fill="none" stroke="#a2a2a2" stroke-width="1.1" />
<rect x="414.5" y="124.8" width="3.2" height="4.8" rx="1.6" fill="none" stroke="#a2a2a2" stroke-width="1.15"/>
<rect x="439.45" y="97.6" width="2.9" height="6.3" rx="1.45" fill="none" stroke="#a2a2a2" stroke-width="1.1"/>
<rect x="444.65000000000003" y="97.6" width="2.9" height="6.3" rx="1.45" fill="none" stroke="#a2a2a2" stroke-width="1.1"/>
<rect x="449.85" y="97.6" width="2.9" height="6.3" rx="1.45" fill="none" stroke="#a2a2a2" stroke-width="1.1"/>
<rect x="476.5" y="70.5" width="13.5" height="12.5" fill="#ececec" stroke="#b4b4b4"/>
<rect x="476" y="70" width="6.5" height="13.5" fill="#adadad"/>
<rect x="476" y="76.2" width="14" height="1" fill="#f3f3f3"/>
<rect x="486" y="71" width="1" height="12" fill="#b4b4b4"/>
<rect x="482.5" y="76.2" width="7.5" height="1" fill="#b4b4b4"/>
<rect x="482.8" y="77.4" width="8.8" height="8" fill="#fafafa" stroke="#a6a6a6" stroke-width="1.2"/>
<path d="M484.6 80.6H489.6M484.6 82.8H489.6M488.6 79.4L485.8 84" fill="none" stroke="#777" stroke-width="0.9" />
<rect x="476.6" y="93.6" width="14.8" height="11.6" fill="#fafafa" stroke="#b4b4b4" stroke-width="1.2"/>
<rect x="481" y="97.6" width="10" height="7.2" fill="#dedede"/>
<rect x="480" y="94" width="1" height="11" fill="#c4c4c4"/>
<rect x="483.8" y="94" width="1" height="11" fill="#c4c4c4"/>
<rect x="487.6" y="94" width="1" height="11" fill="#c4c4c4"/>
<rect x="477" y="97" width="14.399999999999977" height="1" fill="#c4c4c4"/>
<rect x="477" y="101" width="14.399999999999977" height="1" fill="#c4c4c4"/>
<path d="M492.4 95.2L484.6 104.60000000000001" fill="none" stroke="#f3f3f3" stroke-width="6.2" />
<path d="M491.4 96.4L485.8 103.2" fill="none" stroke="#ababab" stroke-width="4.2" />
<path d="M483.6 103.8L486.6 106.60000000000001Q484.4 109.0 479.4 108.8Q482.4 107.0 483.6 103.8Z" fill="#a4a4a4" stroke="#f3f3f3" stroke-width=".7"/>
<ellipse cx="485.7" cy="105.10000000000001" rx="1.9" ry="1.3" transform="rotate(-48 485.7 105.10000000000001)" fill="#f4f4f4"/>
<rect x="476.6" y="116.6" width="14.8" height="11.6" fill="#fafafa" stroke="#b4b4b4" stroke-width="1.2"/>
<rect x="480.6" y="120.4" width="10.4" height="7.4" fill="#dcdcdc"/>
<rect x="480" y="117" width="1" height="11" fill="#c4c4c4"/>
<rect x="477" y="120" width="14.399999999999977" height="1" fill="#c4c4c4"/>
<rect x="477" y="124" width="3" height="1" fill="#c4c4c4"/>
<rect x="483.8" y="117" width="1" height="3" fill="#c4c4c4"/>
<rect x="487.6" y="117" width="1" height="3" fill="#c4c4c4"/>
<path d="M492.4 118.2L484.6 127.60000000000001" fill="none" stroke="#f3f3f3" stroke-width="6.2" />
<path d="M491.4 119.4L485.8 126.2" fill="none" stroke="#ababab" stroke-width="4.2" />
<path d="M483.6 126.8L486.6 129.6Q484.4 132.0 479.4 131.8Q482.4 130.0 483.6 126.8Z" fill="#a4a4a4" stroke="#f3f3f3" stroke-width=".7"/>
<ellipse cx="485.7" cy="128.1" rx="1.9" ry="1.3" transform="rotate(-48 485.7 128.1)" fill="#f4f4f4"/>
<path d="M649.8 77H654.9L652.3499999999999 79.6Z" fill="#b9b9b9"/>
<path d="M654 100H659.1L656.55 102.6Z" fill="#b9b9b9"/>
<path d="M566.1 123.2H571L568.55 125.7Z" fill="#b9b9b9"/>
<rect x="685" y="70.2" width="9.10" height="4.30" fill="#b7b5b6"/>
<rect x="686.10" y="71.30" width="2.9" height="2.1" fill="#fbf7f9"/>
<rect x="690.10" y="71.30" width="2.9" height="2.1" fill="#fbf7f9"/>
<rect x="692.4" y="75.1" width="8.70" height="4.10" fill="#b7b5b6"/>
<rect x="693.50" y="76.20" width="2.7" height="1.9" fill="#fbf7f9"/>
<rect x="697.30" y="76.20" width="2.7" height="1.9" fill="#fbf7f9"/>
<path d="M685.6 77.1H691.6M688.2 74.8L685.7 77.1L688.2 79.4" fill="none" stroke="#aeacad" stroke-width="1.5" />
<rect x="685" y="79.4" width="9.10" height="6.70" fill="#b7b5b6"/>
<rect x="686.10" y="80.50" width="2.9" height="1.7" fill="#fbf7f9"/>
<rect x="690.10" y="80.50" width="2.9" height="1.7" fill="#fbf7f9"/>
<rect x="686.10" y="83.30" width="2.9" height="1.7" fill="#fbf7f9"/>
<rect x="690.10" y="83.30" width="2.9" height="1.7" fill="#fbf7f9"/>
<rect x="685" y="93.2" width="9.10" height="3.80" fill="#b7b5b6"/>
<rect x="686.10" y="94.30" width="2.9" height="1.6" fill="#fbf7f9"/>
<rect x="690.10" y="94.30" width="2.9" height="1.6" fill="#fbf7f9"/>
<rect x="688" y="97.7" width="4.40" height="4.10" fill="#b7b5b6"/>
<rect x="689.10" y="98.80" width="2.2" height="1.9" fill="#d4d2d3"/>
<path d="M693.6 97.3L700.4 103.7M700.4 97.3L693.6 103.7" fill="none" stroke="#c2c0c1" stroke-width="1.3" />
<rect x="685" y="102.2" width="9.10" height="6.70" fill="#b7b5b6"/>
<rect x="686.10" y="103.30" width="2.9" height="1.7" fill="#fbf7f9"/>
<rect x="690.10" y="103.30" width="2.9" height="1.7" fill="#fbf7f9"/>
<rect x="686.10" y="106.10" width="2.9" height="1.7" fill="#fbf7f9"/>
<rect x="690.10" y="106.10" width="2.9" height="1.7" fill="#fbf7f9"/>
<rect x="685.2" y="116.2" width="1.1" height="3.0" fill="#b7b5b6"/>
<rect x="697.2" y="116.2" width="1.1" height="3.0" fill="#b7b5b6"/>
<path d="M687 117.7H696.4M688.8 116.2L687.1 117.7L688.8 119.2M694.6 116.2L696.3 117.7L694.6 119.2" fill="none" stroke="#b7b5b6" stroke-width="1.05" />
<rect x="685" y="120.3" width="14.90" height="10.40" fill="#b7b5b6"/>
<rect x="686.10" y="121.40" width="2.35" height="2.0" fill="#fbf7f9"/>
<rect x="689.55" y="121.40" width="2.35" height="2.0" fill="#fbf7f9"/>
<rect x="693.00" y="121.40" width="2.35" height="2.0" fill="#fbf7f9"/>
<rect x="696.45" y="121.40" width="2.35" height="2.0" fill="#fbf7f9"/>
<rect x="686.10" y="124.50" width="2.35" height="2.0" fill="#fbf7f9"/>
<rect x="689.55" y="124.50" width="2.35" height="2.0" fill="#fbf7f9"/>
<rect x="693.00" y="124.50" width="2.35" height="2.0" fill="#fbf7f9"/>
<rect x="696.45" y="124.50" width="2.35" height="2.0" fill="#fbf7f9"/>
<rect x="686.10" y="127.60" width="2.35" height="2.0" fill="#fbf7f9"/>
<rect x="689.55" y="127.60" width="2.35" height="2.0" fill="#fbf7f9"/>
<rect x="693.00" y="127.60" width="2.35" height="2.0" fill="#fbf7f9"/>
<rect x="696.45" y="127.60" width="2.35" height="2.0" fill="#fbf7f9"/>
<rect x="688.7" y="123.3" width="3.7" height="3.5" fill="#a6a6a6"/>
<rect x="686" y="130.8" width="5" height="0.9" fill="#b7b5b6"/>
<rect x="692.5" y="130.8" width="5.5" height="0.9" fill="#b7b5b6"/>
<path d="M762 77.2H767.1L764.55 79.9Z" fill="#b9b9b9"/>
<path d="M758 100.4H763.1L760.55 103Z" fill="#b9b9b9"/>
<path d="M750.4 123H755.3L752.8499999999999 125.6Z" fill="#b9b9b9"/>
<path d="M811.2 70.9H798L804.4 77.6L798 84.4H811.6" fill="none" stroke="#404040" stroke-width="1.9" stroke-linejoin="miter"/>
<path d="M817.8 76.9H823L820.4 79.9Z" fill="#555"/>
<text x="832.2" y="76.9" font-size="9" fill="#b0b0b0" font-family="Liberation Sans, sans-serif" textLength="5.8" lengthAdjust="spacingAndGlyphs" stroke="#b0b0b0" stroke-width=".25">А</text>
<text x="832.2" y="85.9" font-size="9" fill="#b0b0b0" font-family="Liberation Sans, sans-serif" textLength="5.6" lengthAdjust="spacingAndGlyphs" stroke="#b0b0b0" stroke-width=".25">Я</text>
<path d="M839.8 75.2H847.3L844.7 78.2V81.6H842.4V78.2Z" fill="#b6b6b6"/>
<path d="M851.1 77H855.9L853.5 79.7Z" fill="#b9b9b9"/>
<rect x="797.5" y="93.5" width="13" height="14.8" fill="#f8f1f4" stroke="#b9b9b9"/>
<rect x="797" y="93" width="14" height="3.6" fill="#b9b9b9"/>
<path d="M804 98.6V106M800.6 102.7L804 106.1L807.4 102.7" fill="none" stroke="#a9a9a9" stroke-width="1.5" />
<path d="M815.8 100.2H821L818.4 102.8Z" fill="#b9b9b9"/>
<path d="M837.7 102.1L833.4 105.9" fill="none" stroke="#1380d0" stroke-width="2.6" stroke-linecap="round"/>
<circle cx="840.5" cy="99.4" r="3.85" fill="#fff" stroke="#1583d2" stroke-width="1.55"/>
<circle cx="840.5" cy="99.4" r="3.85" fill="none" stroke="#0a5c99" stroke-width="1.55" stroke-dasharray="1.3 1.12"/>
<path d="M851.1 100.2H855.9L853.5 102.8Z" fill="#555"/>
<g transform="rotate(-40 803.6 123.5)"><rect x="800" y="119.9" width="10.2" height="7.3" rx="1.2" fill="#f5ab8b"/><rect x="796.6" y="119.9" width="2.4" height="7.3" rx=".8" fill="#f5ab8b"/></g>
<path d="M815.8 123.3H821L818.4 126Z" fill="#555"/>
<path d="M914.8 150.3L918.7 146.3L922.6 150.3" fill="none" stroke="#666" stroke-width="1.5" />
<path d="M92.5 151.5V145.5H98.8" fill="none" stroke="#8a8a8a" stroke-width="1" />
<path d="M94.6 147.6L97.6 150.6" fill="none" stroke="#8a8a8a" stroke-width="1" />
<path d="M99 148.4V152H95.4Z" fill="#8a8a8a"/>
<path d="M239.5 151.5V145.5H245.8" fill="none" stroke="#c6c6c6" stroke-width="1" />
<path d="M241.6 147.6L244.6 150.6" fill="none" stroke="#c6c6c6" stroke-width="1" />
<path d="M246 148.4V152H242.4Z" fill="#c6c6c6"/>
<path d="M359.5 151.5V145.5H365.8" fill="none" stroke="#c6c6c6" stroke-width="1" />
<path d="M361.6 147.6L364.6 150.6" fill="none" stroke="#c6c6c6" stroke-width="1" />
<path d="M366 148.4V152H362.4Z" fill="#c6c6c6"/>
<path d="M453.5 151.5V145.5H459.8" fill="none" stroke="#c6c6c6" stroke-width="1" />
<path d="M455.6 147.6L458.6 150.6" fill="none" stroke="#c6c6c6" stroke-width="1" />
<path d="M460 148.4V152H456.4Z" fill="#c6c6c6"/>
<path d="M93 177.2H100L96.5 181Z" fill="#777"/>
<rect x="121" y="175" width="2" height="2" fill="#b4b4b4"/>
<rect x="121" y="179" width="2" height="2" fill="#b4b4b4"/>
<rect x="121" y="183" width="2" height="2" fill="#b4b4b4"/>
<path d="M151 176L161.2 185M161.2 176L151 185" fill="none" stroke="#666" stroke-width="1.5" />
<path d="M186.8 180.8L190.6 184.4L198 175.8" fill="none" stroke="#7a7a7a" stroke-width="2.2" />
<text x="222.4" y="184.2" font-size="15.5" font-style="italic" font-weight="bold" fill="#5a5a5a" font-family="Liberation Serif, serif">f</text>
<text x="228.2" y="184.4" font-size="9.8" font-style="italic" font-weight="bold" fill="#5a5a5a" font-family="Liberation Serif, serif">x</text>
<path d="M916.2 177.6L919.6 181L923 177.6" fill="none" stroke="#666" stroke-width="1.9" />
<path d="M12.7 219.5H24.8V207.7Z" fill="#b5b5b5"/>
<path d="M919 214H926L922.5 210Z" fill="#666"/>
<path d="M919 572.6H926L922.5 576.7Z" fill="#666"/>
<path d="M586.2 592V598.8L582 595.4Z" fill="#666"/>
<path d="M904.8 592V598.8L909 595.4Z" fill="#666"/>
<rect x="560" y="590" width="2" height="2" fill="#ababab"/>
<rect x="560" y="594" width="2" height="2" fill="#ababab"/>
<rect x="560" y="598" width="2" height="2" fill="#ababab"/>
<path d="M30.9 591.5V598L26.8 594.75Z" fill="#c2c2c2"/>
<path d="M56 591.5V598L60.1 594.75Z" fill="#c2c2c2"/>
<circle cx="307.9" cy="594.8" r="7.4" fill="none" stroke="#c8c8c8" stroke-width="1"/>
<path d="M303.6 594.8H312.2M307.9 590.5V599.1" fill="none" stroke="#c0c0c0" stroke-width="1.5" />
<rect x="73.5" y="614.5" width="11.5" height="11" fill="none" stroke="#5c5c5c" stroke-width="1"/>
<rect x="78" y="614" width="7.5" height="2.6" fill="#5c5c5c"/>
<circle cx="75.1" cy="615.9" r="3.3" fill="#f3f3f3"/>
<circle cx="75.1" cy="615.9" r="2.6" fill="#5c5c5c"/>
<rect x="75.4" y="619" width="1.5" height="1.1" fill="#5c5c5c"/>
<rect x="78" y="619" width="1.5" height="1.1" fill="#5c5c5c"/>
<rect x="80.6" y="619" width="1.5" height="1.1" fill="#5c5c5c"/>
<rect x="82.60000000000001" y="619" width="1.5" height="1.1" fill="#5c5c5c"/>
<rect x="75.4" y="621.2" width="1.5" height="1.1" fill="#5c5c5c"/>
<rect x="78" y="621.2" width="1.5" height="1.1" fill="#5c5c5c"/>
<rect x="80.6" y="621.2" width="1.5" height="1.1" fill="#5c5c5c"/>
<rect x="82.60000000000001" y="621.2" width="1.5" height="1.1" fill="#5c5c5c"/>
<rect x="75.4" y="623.4" width="1.5" height="1.1" fill="#5c5c5c"/>
<rect x="78" y="623.4" width="1.5" height="1.1" fill="#5c5c5c"/>
<rect x="80.6" y="623.4" width="1.5" height="1.1" fill="#5c5c5c"/>
<rect x="82.60000000000001" y="623.4" width="1.5" height="1.1" fill="#5c5c5c"/>
<rect x="645.5" y="613.5" width="12" height="12" fill="none" stroke="#6e6e6e"/>
<path d="M649.5 613.5V625.5M653.5 613.5V625.5M645.5 617.5H657.5M645.5 621.5H657.5" fill="none" stroke="#6e6e6e" stroke-width="1" />
<rect x="683.5" y="613.5" width="13" height="12" fill="none" stroke="#6e6e6e"/>
<rect x="686.5" y="616.5" width="7" height="6.2" fill="none" stroke="#6e6e6e"/>
<path d="M688 618.6H692M688 620.6H692" fill="none" stroke="#6e6e6e" stroke-width="0.9" />
<rect x="721.5" y="613.5" width="13" height="12" fill="none" stroke="#6e6e6e"/>
<path d="M725.6 613.5V620M729.5 613.5V620M721.5 620H730" fill="none" stroke="#6e6e6e" stroke-width="1" />
<rect x="752" y="618.6" width="6" height="2" fill="#666"/>
<rect x="762" y="620" width="100" height="1" fill="#a6a6a6"/>
<rect x="812" y="618" width="1" height="5" fill="#a6a6a6"/>
<rect x="865.8" y="619" width="6.8" height="2" fill="#555"/>
<rect x="868.2" y="616.6" width="2" height="6.8" fill="#555"/></svg>
</div></body></html>
